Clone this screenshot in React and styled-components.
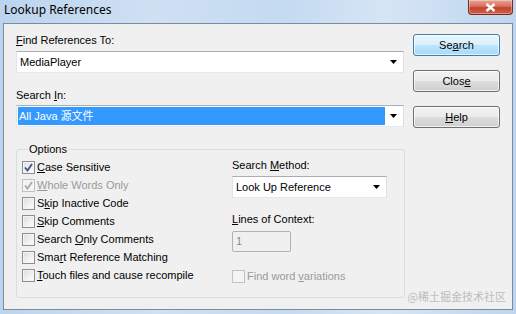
import styled, { createGlobalStyle } from "styled-components";

const GlobalStyle = createGlobalStyle`
  html, body {
    margin: 0;
    padding: 0;
  }
  body {
    font-family: "Liberation Sans", Arial, sans-serif;
    font-size: 11px;
    color: #000;
  }
`;

const Window = styled.div`
  width: 516px;
  height: 314px;
  box-sizing: border-box;
  position: relative;
  display: flex;
  flex-direction: column;
  padding: 0 3px 4px 3px;
  overflow: hidden;
  background: linear-gradient(90deg, #bcd4ee 0%, #cfe0f3 30%, #c4daf1 55%, #d6e5f5 75%, #bdd5ee 100%);
`;

const TitleBar = styled.div`
  height: 23px;
  display: flex;
  align-items: flex-start;
  justify-content: space-between;
`;

const Title = styled.div`
  font-family: "Noto Sans", "Open Sans", sans-serif;
  font-size: 12px;
  line-height: 20px;
  padding-left: 1px;
  color: #000;
`;

const CloseBtn = styled.div`
  width: 45px;
  height: 15px;
  box-sizing: border-box;
  display: flex;
  align-items: center;
  justify-content: center;
  border: 1px solid #7a2a20;
  border-top: none;
  border-radius: 0 0 4px 4px;
  background: linear-gradient(#e8a597 0%, #d7705f 45%, #c4422f 55%, #d0614a 100%);
  box-shadow: inset 0 0 0 1px rgba(255, 255, 255, 0.35);
`;

const Client = styled.div`
  flex: 1;
  position: relative;
  background: #f0f0f0;
  border: 1px solid #7d8c9c;
  padding: 10px 0 0 12px;
`;

const TopSection = styled.div`
  display: flex;
  gap: 9px;
`;

const Fields = styled.div`
  width: 388px;
  display: flex;
  flex-direction: column;
`;

const Label = styled.div`
  line-height: 13px;
  height: 13px;
  margin-top: ${(p) => p.$mt || 0}px;
  color: ${(p) => (p.$disabled ? "#9a9a9a" : "#000")};
  white-space: nowrap;
`;

const U = styled.span`
  text-decoration: underline;
  text-underline-offset: 1px;
`;

const Combo = styled.div`
  height: 22px;
  width: ${(p) => p.$w}px;
  margin-top: ${(p) => p.$mt || 0}px;
  box-sizing: border-box;
  display: flex;
  align-items: center;
  background: #fff;
  border: 1px solid;
  border-color: #abadb3 #dbdfe6 #e3e9ef #e2e3ea;
  padding: 1px;
`;

const ComboText = styled.div`
  flex: 1;
  height: 18px;
  line-height: 18px;
  padding-left: ${(p) => (p.$selected ? 1 : 2)}px;
  background: ${(p) => (p.$selected ? "#3399ff" : "transparent")};
  color: ${(p) => (p.$selected ? "#fff" : "#000")};
  font-family: "Liberation Sans", "Noto Sans CJK SC", sans-serif;
  white-space: nowrap;
`;

const ArrowBox = styled.div`
  width: 17px;
  height: 18px;
  display: flex;
  align-items: center;
  justify-content: center;
`;

const Buttons = styled.div`
  width: 87px;
  display: flex;
  flex-direction: column;
  gap: 14px;
`;

const Button = styled.div`
  height: 22px;
  box-sizing: border-box;
  display: flex;
  align-items: center;
  justify-content: center;
  border-radius: 3px;
  border: 1px solid ${(p) => (p.$primary ? "#3c7fb1" : "#707070")};
  background: ${(p) =>
    p.$primary
      ? "linear-gradient(#eaf6fd 0%, #d9f0fc 50%, #bee6fd 50%, #a7d9f5 100%)"
      : "linear-gradient(#f2f2f2 0%, #ebebeb 50%, #dddddd 50%, #cfcfcf 100%)"};
  box-shadow: inset 0 0 0 1px rgba(255, 255, 255, 0.7);
`;

const Group = styled.fieldset`
  width: 389px;
  box-sizing: border-box;
  margin: 15px 0 0 0;
  padding: 2px 0 12px 5px;
  border: 1px solid #d5dfe5;
  border-radius: 3px;
  display: grid;
  grid-template-columns: 210px 1fr;
`;

const Legend = styled.legend`
  line-height: 13px;
  padding: 0 2px;
  margin-left: 5px;
`;

const CheckColumn = styled.div`
  display: flex;
  flex-direction: column;
`;

const Row = styled.div`
  height: 18px;
  display: flex;
  align-items: center;
  gap: 2px;
  margin-top: ${(p) => p.$mt || 0}px;
  color: ${(p) => (p.$disabled ? "#9a9a9a" : "#000")};
  white-space: nowrap;
`;

const Box = styled.div`
  width: 13px;
  height: 13px;
  box-sizing: border-box;
  border: 1px solid ${(p) => (p.$disabled ? "#c2c2c2" : "#8e8f8f")};
  background: ${(p) =>
    p.$disabled
      ? "#f4f4f4"
      : "linear-gradient(135deg, #dcdcdc 0%, #eeeeee 50%, #ffffff 100%)"};
  box-shadow: inset 0 0 0 1px #f4f4f4;
  display: flex;
  align-items: center;
  justify-content: center;
`;

const SideColumn = styled.div`
  display: flex;
  flex-direction: column;
  padding-top: 1px;
`;

const NumInput = styled.div`
  width: 59px;
  height: 21px;
  margin-top: 5px;
  box-sizing: border-box;
  border: 1px solid #adb2b5;
  border-radius: 2px;
  background: #f0f0f0;
  color: #8a8a8a;
  line-height: 19px;
  padding-left: 3px;
`;

const Watermark = styled.div`
  position: absolute;
  right: 6px;
  bottom: 6px;
  font-family: "Noto Sans CJK SC", sans-serif;
  font-size: 11px;
  line-height: 14px;
  color: #bdbdbd;
`;

const Arrow = () => (
  <svg width="7" height="4" viewBox="0 0 7 4">
    <path d="M0 0h7L3.5 4z" fill="#000" />
  </svg>
);

const Check = ({ disabled }) => (
  <svg width="9" height="9" viewBox="0 0 9 9">
    <path
      d="M1 4.5 L3.5 7.5 L8 1"
      fill="none"
      stroke={disabled ? "#a8a8a8" : "#3f518e"}
      strokeWidth="1.8"
    />
  </svg>
);

const CheckBox = ({ checked, disabled, children, mt }) => (
  <Row $disabled={disabled} $mt={mt}>
    <Box $disabled={disabled}>{checked && <Check disabled={disabled} />}</Box>
    <span>{children}</span>
  </Row>
);

const App = () => (
  <>
    <GlobalStyle />
    <Window>
      <TitleBar>
        <Title>Lookup References</Title>
        <CloseBtn>
          <svg width="11" height="9" viewBox="0 0 11 9">
            <path d="M1.5 1 L9.5 8 M9.5 1 L1.5 8" stroke="#fff" strokeWidth="2.4" />
          </svg>
        </CloseBtn>
      </TitleBar>
      <Client>
        <TopSection>
          <Fields>
            <Label>
              <U>F</U>ind References To:
            </Label>
            <Combo $w={388} $mt={4}>
              <ComboText>MediaPlayer</ComboText>
              <ArrowBox>
                <Arrow />
              </ArrowBox>
            </Combo>
            <Label $mt={16}>
              Search <U>I</U>n:
            </Label>
            <Combo $w={388} $mt={3}>
              <ComboText $selected>All Java 源文件</ComboText>
              <ArrowBox>
                <Arrow />
              </ArrowBox>
            </Combo>
          </Fields>
          <Buttons>
            <Button $primary>
              Se<U>a</U>rch
            </Button>
            <Button>
              Clos<U>e</U>
            </Button>
            <Button>
              <U>H</U>elp
            </Button>
          </Buttons>
        </TopSection>
        <Group>
          <Legend>Options</Legend>
          <CheckColumn>
            <CheckBox checked>
              <U>C</U>ase Sensitive
            </CheckBox>
            <CheckBox checked disabled>
              <U>W</U>hole Words Only
            </CheckBox>
            <CheckBox>
              S<U>k</U>ip Inactive Code
            </CheckBox>
            <CheckBox>
              <U>S</U>kip Comments
            </CheckBox>
            <CheckBox>
              Search <U>O</U>nly Comments
            </CheckBox>
            <CheckBox>
              Sma<U>r</U>t Reference Matching
            </CheckBox>
            <CheckBox>
              <U>T</U>ouch files and cause recompile
            </CheckBox>
          </CheckColumn>
          <SideColumn>
            <Label>
              Search <U>M</U>ethod:
            </Label>
            <Combo $w={155} $mt={4}>
              <ComboText>Look Up Reference</ComboText>
              <ArrowBox>
                <Arrow />
              </ArrowBox>
            </Combo>
            <Label $mt={15}>
              <U>L</U>ines of Context:
            </Label>
            <NumInput>1</NumInput>
            <CheckBox disabled mt={15}>
              Find word <U>v</U>ariations
            </CheckBox>
          </SideColumn>
        </Group>
        <Watermark>@稀土掘金技术社区</Watermark>
      </Client>
    </Window>
  </>
);

export default App;
